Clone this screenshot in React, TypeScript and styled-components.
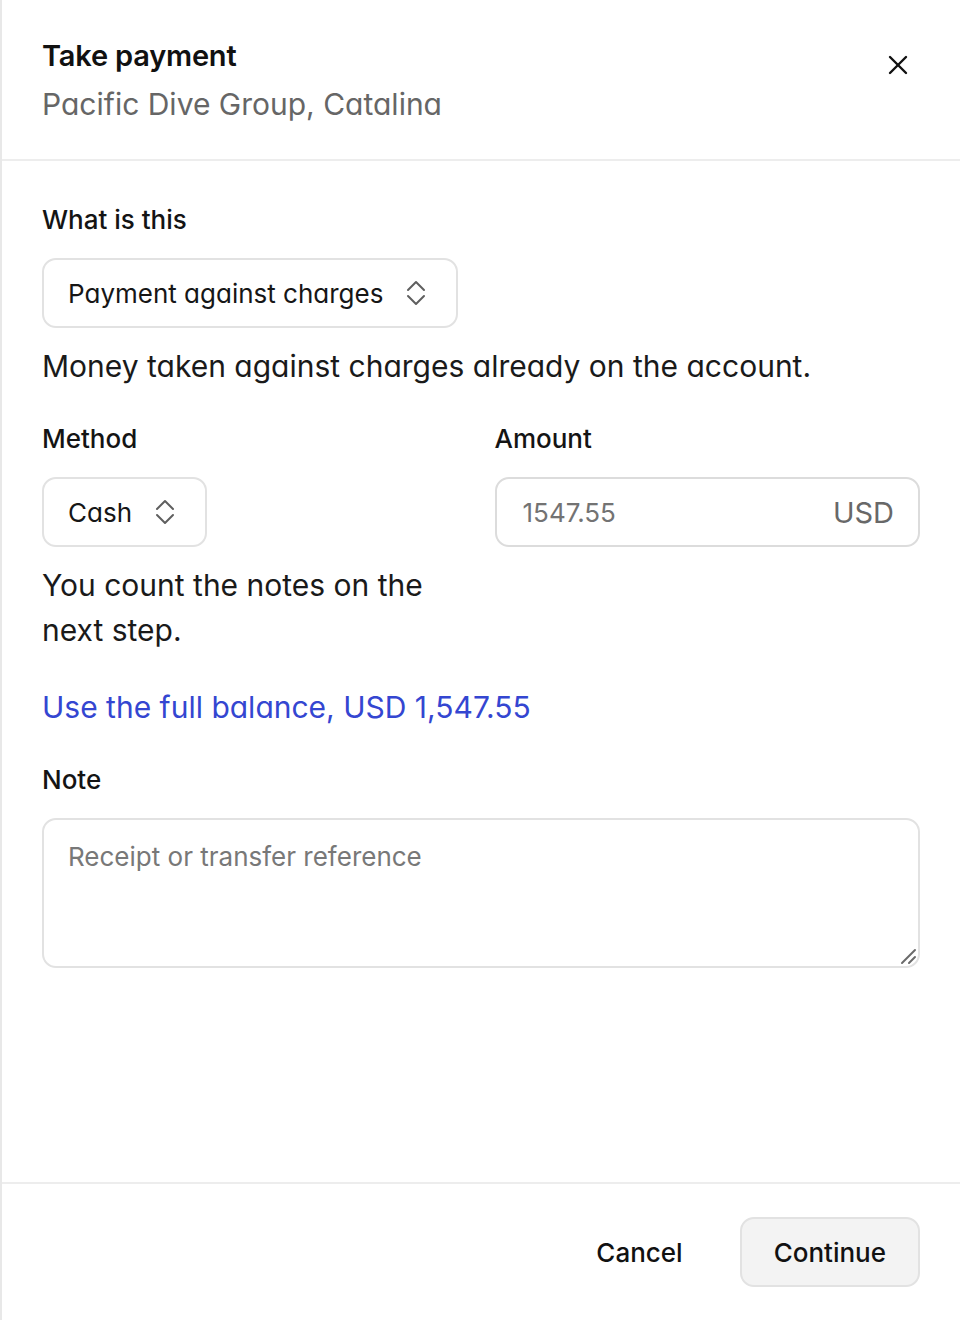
import React from "react";
import styled, { createGlobalStyle } from "styled-components";

const GlobalStyle = createGlobalStyle`
  * { box-sizing: border-box; }
  html, body { margin: 0; padding: 0; background: #fff; }
  body {
    font-family: Inter, "Liberation Sans", sans-serif;
    color: #141414;
    -webkit-font-smoothing: antialiased;
  }
`;

const Panel = styled.div`
  min-height: 100vh;
  display: flex;
  flex-direction: column;
  border-left: 2px solid #e8e8e8;
`;

const Header = styled.header`
  display: flex;
  justify-content: space-between;
  align-items: flex-start;
  padding: 38px 40px 35px;
  border-bottom: 2px solid #ededed;
`;

const Title = styled.h1`
  margin: 0;
  font-size: 29px;
  line-height: 36px;
  font-weight: 600;
  color: #111;
  letter-spacing: -0.2px;
`;

const Subtitle = styled.div`
  margin-top: 10px;
  font-size: 30px;
  line-height: 40px;
  color: #666;
  font-feature-settings: "cv11";
`;

const CloseButton = styled.button`
  width: 45px;
  height: 45px;
  margin-top: 4px;
  border: 0;
  background: none;
  display: flex;
  align-items: center;
  justify-content: center;
  padding: 0;
  cursor: pointer;
  color: #111;
`;

const Body = styled.main`
  flex: 1;
  display: flex;
  flex-direction: column;
  padding: 41px 40px 40px;
`;

const Field = styled.div<{ $gap?: number }>`
  display: flex;
  flex-direction: column;
  align-items: flex-start;
  min-width: 0;
  margin-top: ${(p) => p.$gap ?? 0}px;
`;

const Label = styled.label`
  font-size: 26px;
  line-height: 36px;
  font-weight: 500;
  color: #141414;
  margin-bottom: 20px;
`;

const SelectBox = styled.button`
  height: 70px;
  display: flex;
  align-items: center;
  gap: 23px;
  padding: 0 30px 0 24px;
  border: 2px solid #e2e2e2;
  border-radius: 14px;
  background: #fff;
  font-family: inherit;
  font-size: 26px;
  color: #161616;
  font-feature-settings: "cv11";
  cursor: pointer;
`;

const Hint = styled.p`
  margin: 16px 0 0;
  font-size: 30px;
  line-height: 45px;
  color: #1a1a1a;
  font-feature-settings: "cv11";
`;

const Row = styled.div`
  display: grid;
  grid-template-columns: minmax(0, 1fr) minmax(0, 1fr);
  column-gap: 27px;
  margin-top: 32px;
`;

const AmountBox = styled.div`
  width: 100%;
  height: 70px;
  display: flex;
  align-items: center;
  padding: 0 24px 0 26px;
  border: 2px solid #dcdcdc;
  border-radius: 14px;
`;

const AmountInput = styled.input`
  flex: 1;
  width: 0;
  min-width: 0;
  border: 0;
  outline: none;
  padding: 0;
  font-family: inherit;
  font-size: 26px;
  color: #141414;
  &::placeholder { color: #737373; }
`;

const Currency = styled.span`
  font-size: 29px;
  color: #686868;
`;

const Link = styled.a`
  margin-top: 32px;
  font-size: 30px;
  line-height: 45px;
  color: #3446d1;
  text-decoration: none;
  font-feature-settings: "cv11";
  cursor: pointer;
  align-self: flex-start;
`;

const NoteWrap = styled.div`
  position: relative;
  width: 100%;
`;

const NoteArea = styled.textarea`
  display: block;
  width: 100%;
  height: 150px;
  padding: 20px 24px;
  border: 2px solid #e2e2e2;
  border-radius: 14px;
  font-family: inherit;
  font-size: 26px;
  line-height: 34px;
  color: #141414;
  resize: none;
  outline: none;
  &::placeholder { color: #787878; }
`;

const Grip = styled.svg`
  position: absolute;
  right: 3px;
  bottom: 3px;
  pointer-events: none;
`;

const Footer = styled.footer`
  display: flex;
  justify-content: flex-end;
  align-items: center;
  gap: 23px;
  padding: 33px 40px;
  border-top: 2px solid #ededed;
`;

const Button = styled.button<{ $primary?: boolean }>`
  height: 70px;
  padding: 0 32px;
  border-radius: 14px;
  border: 2px solid ${(p) => (p.$primary ? "#e2e2e2" : "transparent")};
  background: ${(p) => (p.$primary ? "#f3f3f3" : "transparent")};
  font-family: inherit;
  font-size: 26px;
  font-weight: 500;
  color: #111;
  cursor: pointer;
`;

const Chevrons = () => (
  <svg width="20" height="26" viewBox="0 0 20 26" fill="none" stroke="#5f5f5f" strokeWidth="2" strokeLinecap="round" strokeLinejoin="round">
    <path d="M2 10 L10 2 L18 10" />
    <path d="M2 16 L10 24 L18 16" />
  </svg>
);

const CloseIcon = () => (
  <svg width="20" height="20" viewBox="0 0 20 20" fill="none" stroke="currentColor" strokeWidth="2.4" strokeLinecap="round">
    <path d="M2 2 L18 18" />
    <path d="M18 2 L2 18" />
  </svg>
);

const App = () => {
  return (
    <>
      <GlobalStyle />
      <Panel>
        <Header>
          <div>
            <Title>Take payment</Title>
            <Subtitle>Pacific Dive Group, Catalina</Subtitle>
          </div>
          <CloseButton aria-label="Close">
            <CloseIcon />
          </CloseButton>
        </Header>

        <Body>
          <Field>
            <Label>What is this</Label>
            <SelectBox>
              <span>Payment against charges</span>
              <Chevrons />
            </SelectBox>
          </Field>
          <Hint>Money taken against charges already on the account.</Hint>

          <Row>
            <Field>
              <Label>Method</Label>
              <SelectBox>
                <span>Cash</span>
                <Chevrons />
              </SelectBox>
              <Hint>You count the notes on the next step.</Hint>
            </Field>
            <Field>
              <Label>Amount</Label>
              <AmountBox>
                <AmountInput placeholder="1547.55" />
                <Currency>USD</Currency>
              </AmountBox>
            </Field>
          </Row>

          <Link>Use the full balance, USD 1,547.55</Link>

          <Field $gap={32}>
            <Label>Note</Label>
            <NoteWrap>
              <NoteArea placeholder="Receipt or transfer reference" />
              <Grip width="18" height="18" viewBox="0 0 18 18" fill="none" stroke="#6a6a6a" strokeWidth="2" strokeLinecap="round">
                <path d="M3 16 L16 3" />
                <path d="M10 16 L16 10" />
              </Grip>
            </NoteWrap>
          </Field>
        </Body>

        <Footer>
          <Button>Cancel</Button>
          <Button $primary>Continue</Button>
        </Footer>
      </Panel>
    </>
  );
};

export default App;
